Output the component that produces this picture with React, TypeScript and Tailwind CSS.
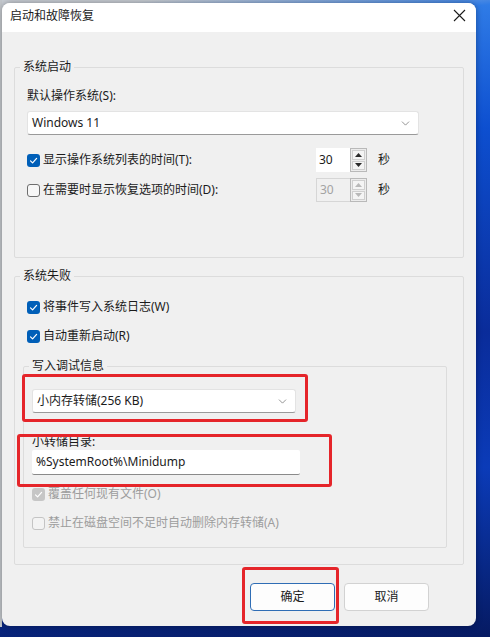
import React from 'react';
import { ChevronDown } from 'lucide-react';

const font = "font-['Noto_Sans','Noto_Sans_CJK_SC',sans-serif]";

type CheckProps = { checked?: boolean; disabled?: boolean };

const Check = ({ checked, disabled }: CheckProps) => {
  if (checked) {
    return (
      <span
        className={`flex w-[13px] h-[13px] shrink-0 items-center justify-center rounded-[3px] ${
          disabled ? 'bg-[#c6c6c6]' : 'bg-[#005fb8]'
        }`}
      >
        <svg width="11" height="11" viewBox="0 0 11 11" fill="none">
          <path d="M2.5 5.8 L4.6 7.9 L8.6 3.4" stroke="white" strokeWidth="1.2" strokeLinecap="round" strokeLinejoin="round" />
        </svg>
      </span>
    );
  }
  return (
    <span
      className={`block w-[13px] h-[13px] shrink-0 rounded-[3px] border ${
        disabled ? 'border-[#c4c4c4] bg-[#f3f3f3]' : 'border-[#6e6e6e] bg-[#f7f7f7]'
      }`}
    />
  );
};

const CheckRow = ({ checked, disabled, label }: CheckProps & { label: string }) => (
  <div className={`flex items-center gap-[3px] h-4 ${disabled ? 'text-[#9d9d9d]' : 'text-[#1b1b1b]'}`}>
    <Check checked={checked} disabled={disabled} />
    <span>{label}</span>
  </div>
);

const Select = ({ value, width }: { value: string; width: string }) => (
  <div
    className={`${width} h-6 flex items-center justify-between pl-[4px] pr-[6px] bg-white border border-[#e3e3e3] border-b-[#9a9a9a] rounded-[3px] text-[#1b1b1b]`}
  >
    <span>{value}</span>
    <ChevronDown size={13} strokeWidth={1.2} className="text-[#5c5c5c]" />
  </div>
);

const Arrow = ({ up, disabled }: { up?: boolean; disabled?: boolean }) => (
  <div className="flex-1 flex items-center justify-center bg-[#f4f4f4] border border-[#cfcfcf]">
    <svg width="7" height="4" viewBox="0 0 7 4">
      <path d={up ? 'M0 4 L3.5 0 L7 4 Z' : 'M0 0 L3.5 4 L7 0 Z'} fill={disabled ? '#b8b8b8' : '#2a2a2a'} />
    </svg>
  </div>
);

const Spinner = ({ disabled }: { disabled?: boolean }) => (
  <div className="flex items-center">
    <div
      className={`w-[34px] h-6 flex items-center pl-[3px] ${
        disabled ? 'bg-[#f0f0f0] border border-r-0 border-[#d6d6d6] text-[#a3a3a3]' : 'bg-white text-[#1b1b1b]'
      }`}
    >
      30
    </div>
    <div className="w-[17px] h-6 flex flex-col gap-[1px] p-[1px] bg-[#ececec] border border-[#b9b9b9]">
      <Arrow up disabled={disabled} />
      <Arrow disabled={disabled} />
    </div>
    <span className="ml-[11px] text-[#1b1b1b]">秒</span>
  </div>
);

const Group = ({ title, className, children }: { title: string; className: string; children: React.ReactNode }) => (
  <fieldset className={`border border-[#dcdcdc] rounded-[2px] ${className}`}>
    <legend className="ml-[5px] px-[3px] leading-4 text-[#1b1b1b]">{title}</legend>
    {children}
  </fieldset>
);

export default function App() {
  return (
    <div
      className={`relative w-[490px] h-[637px] overflow-hidden text-[12px] leading-4 ${font} bg-[linear-gradient(175deg,#c7ccd3_0%,#c7ccd3_2%,#2f7be6_7%,#0d4fd0_25%,#0a2c9a_55%,#0b3bb8_75%,#061a62_100%)]`}
    >
      <div className="flex h-[627px]">
        <div className="w-[2px] bg-[#c3c7cc]" />

        {/* dialog window */}
        <div className="mt-[3px] w-[474px] h-[623px] flex flex-col rounded-[8px] overflow-hidden bg-[#f0f0f0] shadow-[0_0_6px_rgba(0,0,0,0.35)]">
          <div className="h-[29px] shrink-0 flex items-start justify-between bg-white pl-[8px] pr-[10px] pt-[5px]">
            <span className="text-[#1b1b1b]">启动和故障恢复</span>
            <svg width="13" height="13" viewBox="0 0 13 13" className="mt-[1px]">
              <path d="M1 1 L12 12 M12 1 L1 12" stroke="#1b1b1b" strokeWidth="1.1" />
            </svg>
          </div>

          <div className="flex flex-col pl-[12px] pt-[27px]">
            {/* 系统启动 */}
            <Group title="系统启动" className="w-[450px] h-[199px]">
              <div className="pl-[12px] pt-[13px]">
                <div className="h-4 text-[#1b1b1b]">默认操作系统(S):</div>
                <div className="mt-[7px]">
                  <Select value="Windows 11" width="w-[392px]" />
                </div>
                <div className="mt-[13px] flex items-center">
                  <div className="w-[289px]">
                    <CheckRow checked label="显示操作系统列表的时间(T):" />
                  </div>
                  <Spinner />
                </div>
                <div className="mt-[6px] flex items-center">
                  <div className="w-[289px]">
                    <CheckRow label="在需要时显示恢复选项的时间(D):" />
                  </div>
                  <Spinner disabled />
                </div>
              </div>
            </Group>

            {/* 系统失败 */}
            <Group title="系统失败" className="mt-[10px] w-[450px] h-[297px]">
              <div className="pl-[8px] pt-[15px]">
                <div className="pl-[4px]">
                  <CheckRow checked label="将事件写入系统日志(W)" />
                </div>
                <div className="pl-[4px] mt-[13px]">
                  <CheckRow checked label="自动重新启动(R)" />
                </div>

                <Group title="写入调试信息" className="mt-[14px] w-[424px] h-[190px]">
                  <div className="pl-[8px] pt-[15px]">
                    <Select value="小内存转储(256 KB)" width="w-[264px]" />
                    <div className="mt-[21px] h-4 text-[#1b1b1b]">小转储目录:</div>
                    <div className="w-[268px] h-[25px] flex items-center pl-[4px] bg-white border-b border-[#8a8a8a] rounded-[2px] text-[#1b1b1b]">
                      %SystemRoot%\Minidump
                    </div>
                    <div className="mt-[11px]">
                      <CheckRow checked disabled label="覆盖任何现有文件(O)" />
                    </div>
                    <div className="mt-[13px]">
                      <CheckRow disabled label="禁止在磁盘空间不足时自动删除内存转储(A)" />
                    </div>
                  </div>
                </Group>
              </div>
            </Group>

            <div className="mt-[18px] flex justify-end gap-[9px] pr-[47px]">
              <button className="w-[85px] h-[28px] rounded-[4px] bg-[#fdfdfd] border border-[#2f6db5] text-[#1b1b1b]">
                确定
              </button>
              <button className="w-[85px] h-[28px] rounded-[4px] bg-[#fdfdfd] border border-[#d2d2d2] text-[#1b1b1b]">
                取消
              </button>
            </div>
          </div>
        </div>
      </div>

      {/* red highlight marks */}
      <div className="absolute left-[22px] top-[374px] w-[286px] h-[48px] border-[3px] border-[#e5252a] rounded-[3px]" />
      <div className="absolute left-[17px] top-[434px] w-[315px] h-[53px] border-[3px] border-[#e5252a] rounded-[3px]" />
      <div className="absolute left-[242px] top-[567px] w-[97px] h-[57px] border-[3px] border-[#e5252a] rounded-[3px]" />
    </div>
  );
}
